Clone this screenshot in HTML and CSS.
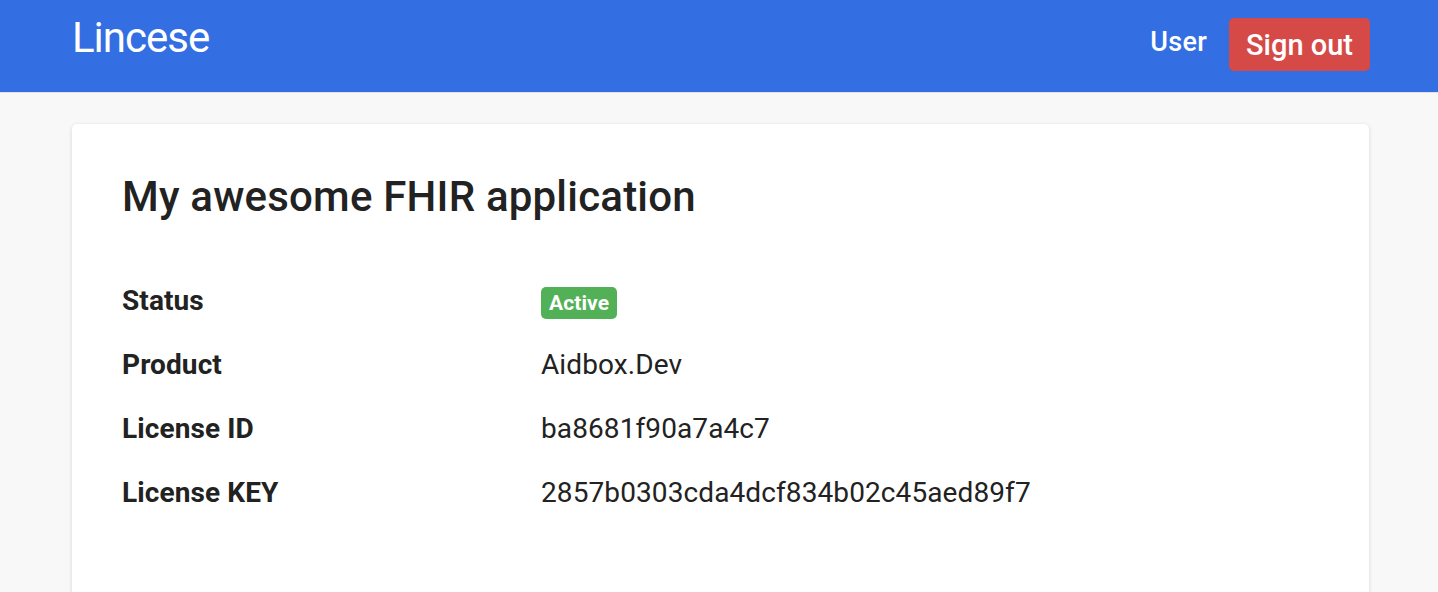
FILE: index.html
```html
<!DOCTYPE html>
<html lang="en">
<head>
<meta charset="utf-8">
<title>Lincese</title>
<link rel="stylesheet" href="styles.css">
</head>
<body>
<header class="topbar">
  <div class="brand">Lincese</div>
  <nav class="nav">
    <span class="user">User</span>
    <button class="signout">Sign out</button>
  </nav>
</header>
<main class="page">
  <section class="card">
    <h1 class="card-title">My awesome FHIR application</h1>
    <dl class="details">
      <dt class="label">Status</dt>
      <dd class="value"><span class="badge">Active</span></dd>
      <dt class="label">Product</dt>
      <dd class="value">Aidbox.Dev</dd>
      <dt class="label">License ID</dt>
      <dd class="value">ba8681f90a7a4c7</dd>
      <dt class="label">License KEY</dt>
      <dd class="value">2857b0303cda4dcf834b02c45aed89f7</dd>
    </dl>
  </section>
</main>
</body>
</html>
```

FILE: styles.css
```css
* { box-sizing: border-box; }
html, body { margin: 0; padding: 0; }
body {
  background: #f8f8f8;
  font-family: Roboto, "Liberation Sans", sans-serif;
  color: #222222;
  overflow: hidden;
  height: 592px;
}
.topbar {
  height: 93px;
  background: #336ee3;
  border-bottom: 1px solid #e2e2e2;
  display: flex;
  justify-content: space-between;
  align-items: flex-start;
  padding: 0 68px 0 72px;
  color: #ffffff;
}
.brand {
  font-size: 42px;
  font-weight: 400;
  line-height: 42px;
  margin-top: 17px;
  letter-spacing: -1px;
}
.nav {
  display: flex;
  align-items: flex-start;
  gap: 22px;
}
.user {
  font-size: 27px;
  font-weight: 500;
  line-height: 53px;
  margin-top: 16px;
  letter-spacing: 0.3px;
}
.signout {
  margin-top: 18px;
  height: 53px;
  padding: 2px 17px 0;
  line-height: 51px;
  font-family: inherit;
  font-size: 29px;
  font-weight: 500;
  color: #ffffff;
  background: #d54a47;
  border: none;
  border-radius: 5px;
}
.page {
  padding: 31px 69px 0 72px;
}
.card {
  background: #ffffff;
  border-radius: 5px;
  box-shadow: 0 1px 4px rgba(0, 0, 0, 0.14);
  padding: 48px 50px 80px;
  min-height: 520px;
}
.card-title {
  margin: 0;
  font-size: 42px;
  font-weight: 500;
  line-height: 49px;
  letter-spacing: 0.2px;
}
.details {
  display: grid;
  grid-template-columns: 419px 1fr;
  margin: 48px 0 0;
}
.label, .value {
  margin: 0;
  font-size: 28px;
  line-height: 64px;
  height: 64px;
  letter-spacing: 0.1px;
}
.label { font-weight: 700; }
.value { font-weight: 400; }
.badge {
  display: inline-block;
  vertical-align: middle;
  margin-top: 1px;
  height: 32px;
  line-height: 32px;
  padding: 0 8px;
  font-size: 21px;
  font-weight: 700;
  color: #ffffff;
  background: #52b157;
  border-radius: 5px;
}
```
